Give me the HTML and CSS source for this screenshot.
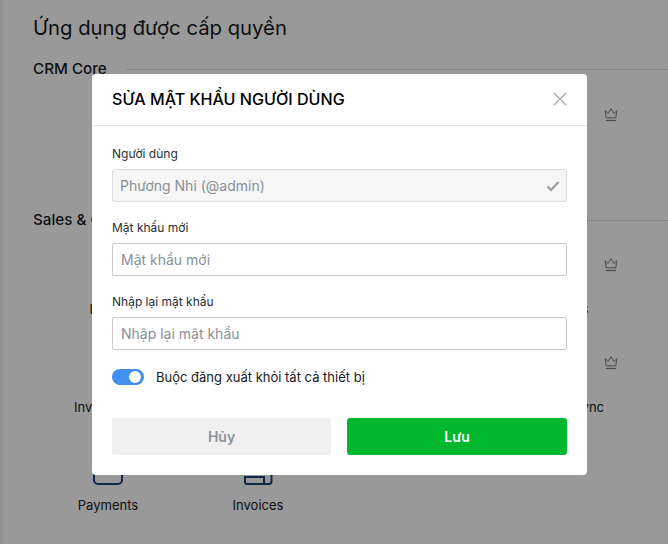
FILE: index.html
```html
<!DOCTYPE html>
<html lang="vi">
<head>
<meta charset="utf-8">
<title>Ứng dụng được cấp quyền</title>
<link rel="stylesheet" href="styles.css">
</head>
<body>
<svg class="defs" width="0" height="0" aria-hidden="true">
  <symbol id="crown" viewBox="0 0 16 16">
    <path d="M2.2 3.6 5 6.6 8 1.6l3 5 2.8-3-1 7.2H3.200z" fill="none" stroke="currentColor" stroke-width="1" stroke-linejoin="round"/>
    <path d="M2.800 13.500h10.400" fill="none" stroke="currentColor" stroke-width="1.200"/>
  </symbol>
</svg>
<main class="page">
  <h1 class="page-title">Ứng dụng được cấp quyền</h1>
  <section class="group group-core">
    <div class="group-head"><h2>CRM Core</h2><span class="rule"></span></div>
    <div class="apps">
      <div class="app"></div><div class="app"></div><div class="app"></div>
      <div class="app"><svg class="crown"><use href="#crown"/></svg></div>
    </div>
  </section>
  <section class="group group-sales">
    <div class="group-head"><h2>Sales &amp; Orders</h2><span class="rule"></span></div>
    <div class="apps">
      <div class="app"><span class="app-name">Leads</span></div>
      <div class="app"></div><div class="app"></div>
      <div class="app"><svg class="crown"><use href="#crown"/></svg><span class="app-name">Discounts</span></div>
      <div class="app"><span class="app-name">Inventories</span></div>
      <div class="app"></div><div class="app"></div>
      <div class="app"><svg class="crown"><use href="#crown"/></svg><span class="app-name">Inventory Sync</span></div>
      <div class="app">
        <svg class="app-icon" viewBox="0 0 34 34"><rect x="3" y="4" width="28" height="28" rx="4" fill="none" stroke="currentColor" stroke-width="2"/><path d="M12 22h6" stroke="currentColor" stroke-width="1.500"/></svg>
        <span class="app-name">Payments</span>
      </div>
      <div class="app">
        <svg class="app-icon" viewBox="0 0 34 34"><path d="M4 24v6c0 1 1 2 2 2h22c1.500 0 2.500-1 2.500-2.500V4M4 25h19v5c0 1 .6 2 1.500 2" fill="none" stroke="currentColor" stroke-width="2"/></svg>
        <span class="app-name">Invoices</span>
      </div>
    </div>
  </section>
</main>
<div class="overlay"></div>
<div class="modal" role="dialog" aria-modal="true">
  <header class="modal-head">
    <h3>SỬA MẬT KHẨU NGƯỜI DÙNG</h3>
    <svg class="close" viewBox="0 0 14 14"><path d="M1 1l12 12M13 1 1 13" fill="none" stroke="currentColor" stroke-width="1.300"/></svg>
  </header>
  <form class="modal-body">
    <div class="field">
      <label>Người dùng</label>
      <div class="input input-disabled">
        <span>Phương Nhi (@admin)</span>
        <svg class="check" viewBox="0 0 14 12"><path d="M1.500 6.500 5 10l7.500-8" fill="none" stroke="currentColor" stroke-width="2"/></svg>
      </div>
    </div>
    <div class="field">
      <label>Mật khẩu mới</label>
      <div class="input"><span>Mật khẩu mới</span></div>
    </div>
    <div class="field">
      <label>Nhập lại mật khẩu</label>
      <div class="input"><span>Nhập lại mật khẩu</span></div>
    </div>
    <div class="toggle-row">
      <span class="toggle"><span class="knob"></span></span>
      <span class="toggle-label">Buộc đăng xuất khỏi tất cả thiết bị</span>
    </div>
    <div class="actions">
      <button type="button" class="btn btn-cancel">Hủy</button>
      <button type="button" class="btn btn-save">Lưu</button>
    </div>
  </form>
</div>
</body>
</html>
```
FILE: styles.css
```css
* { box-sizing: border-box; }
html, body { margin: 0; height: 100%; }
body {
  width: 668px;
  height: 544px;
  overflow: hidden;
  position: relative;
  background: #fff;
  color: #16191d;
  font-family: Inter, "Noto Sans", sans-serif;
}
.defs { position: absolute; }
.page { height: 544px; padding: 14px 0 0 33px; border-left: 3px solid #f0f0f0; margin: 0; }
.page-title {
  margin: 0 0 0 -3px;
  font-size: 20.300px;
  line-height: 28px;
  font-weight: 400;
}
.group-core { height: 151px; margin-top: 15px; }
.group-head { display: flex; align-items: center; gap: 20px; margin-left: -3px; height: 24px; }
.group-head h2 { margin: 0; font-size: 15.200px; font-weight: 500; line-height: 24px; white-space: nowrap; }
.rule { flex: 1; border-top: 1px dotted #ccc; }
.apps {
  display: grid;
  grid-template-columns: repeat(4, 150px);
  grid-auto-rows: 98px;
  margin-left: -3px;
}
.group-core .apps { margin-top: -11px; }
.group-sales .apps { margin-top: -12px; }
.app {
  position: relative;
  display: flex;
  flex-direction: column;
  justify-content: flex-end;
  align-items: center;
}
.app-icon { width: 34px; height: 34px; color: #1d3f72; margin-bottom: 10px; }
.app-name { font-size: 13px; line-height: 18px; white-space: nowrap; }
.crown { position: absolute; top: 37px; right: 14px; width: 16px; height: 16px; color: #7e7e7e; }
.overlay { position: absolute; inset: 0; background: rgba(0, 0, 0, 0.4); }
.modal {
  position: absolute;
  left: 92px;
  top: 74px;
  width: 495px;
  height: 401px;
  background: #fff;
  border-radius: 4px;
  color: #1f2328;
}
.modal-head {
  display: flex;
  align-items: center;
  justify-content: space-between;
  height: 52px;
  padding: 0 20px 2px;
  border-bottom: 1px solid #e4e4e4;
}
.modal-head h3 { margin: 0; font-size: 16.100px; line-height: 24px; font-weight: 500; color: #000; }
.close { width: 14px; height: 14px; color: #a8a8a8; }
.modal-body { padding: 19px 20px 20px; }
.field { margin-bottom: 17px; }
.field label { display: block; font-size: 12px; line-height: 18px; margin-bottom: 6px; color: #2a2e33; }
.input {
  display: flex;
  align-items: center;
  justify-content: space-between;
  height: 33px;
  padding: 0 8px;
  border: 1px solid #c9c9c9;
  border-radius: 2px;
  font-size: 14px;
  color: #8a8f96;
}
.input-disabled { background: #f6f6f6; border-color: #dcdcdc; padding: 0 6px 0 7px; border-radius: 3px; }
.check { width: 14px; height: 12px; color: #999; }
.toggle-row { display: flex; align-items: center; gap: 12px; margin-top: 18px; height: 18px; }
.toggle { width: 32px; height: 16px; border-radius: 8px; background: #418fee; position: relative; display: block; }
.knob { position: absolute; top: 2px; right: 3px; width: 12px; height: 12px; border-radius: 50%; background: #fff; }
.toggle-label { font-size: 13px; line-height: 18px; color: #16191d; }
.actions { display: grid; grid-template-columns: 219px 220px; gap: 16px; margin-top: 32px; }
.btn {
  height: 37px;
  border: 0;
  border-radius: 3px;
  font-family: inherit;
  font-size: 14px;
  font-weight: 600;
}
.btn-cancel { background: #f0f0f0; color: #8d9299; }
.btn-save { background: #00b72e; color: #fff; }
```
